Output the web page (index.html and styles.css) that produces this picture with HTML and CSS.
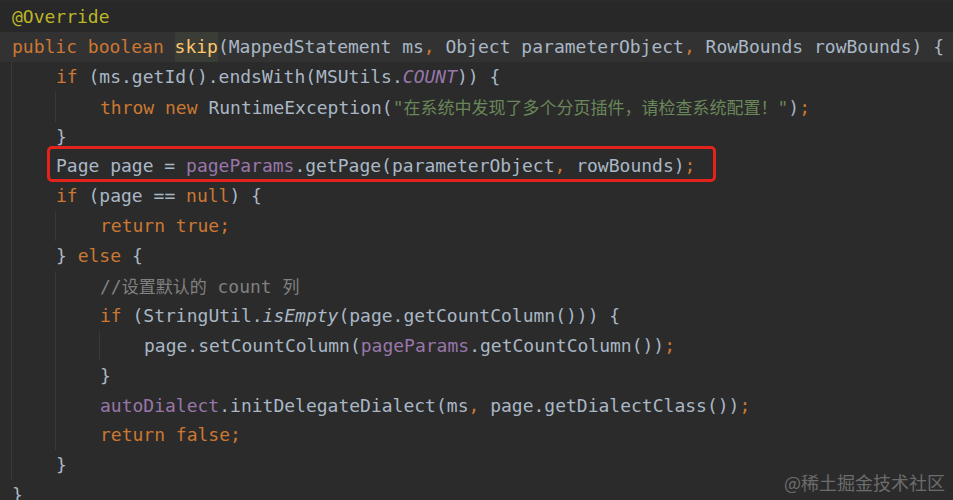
FILE: index.html
```html
<!DOCTYPE html>
<html lang="zh">
	<head>
		<meta charset="utf-8">
		<title>skip()</title>
		<link rel="stylesheet" href="styles.css">
	</head>
	<body>
		<div class="editor">
			<div class="ln first"><span class="ann">@Override</span></div>
			<div class="ln caret"><span class="kw">public boolean</span> <span class="fn">skip</span>(MappedStatement ms<span class="kw">,</span> Object parameterObject<span class="kw">,</span> RowBounds rowBounds) {</div>
			<div class="blk">
				<div class="ln"><span class="kw">if</span> (ms.getId().endsWith(MSUtils.<span class="fld it">COUNT</span>)) {</div>
				<div class="blk">
					<div class="ln"><span class="kw">throw new</span> RuntimeException(<span class="str">"<span class="cjk">在系统中发现了多个分页插件，请检查系统配置！</span>"</span>)<span class="kw">;</span></div>
				</div>
				<div class="ln">}</div>
				<div class="ln marked">Page page = <span class="fld">pageParams</span>.getPage(parameterObject<span class="kw">,</span> rowBounds)<span class="kw">;</span></div>
				<div class="ln"><span class="kw">if</span> (page == <span class="kw">null</span>) {</div>
				<div class="blk">
					<div class="ln"><span class="kw">return true;</span></div>
				</div>
				<div class="ln">} <span class="kw">else</span> {</div>
				<div class="blk">
					<div class="ln"><span class="cmt">//<span class="cjk">设置默认的</span> count <span class="cjk">列</span></span></div>
					<div class="ln"><span class="kw">if</span> (StringUtil.<span class="it">isEmpty</span>(page.getCountColumn())) {</div>
					<div class="blk">
						<div class="ln">page.setCountColumn(<span class="fld">pageParams</span>.getCountColumn())<span class="kw">;</span></div>
					</div>
					<div class="ln">}</div>
					<div class="ln"><span class="fld">autoDialect</span>.initDelegateDialect(ms<span class="kw">,</span> page.getDialectClass())<span class="kw">;</span></div>
					<div class="ln"><span class="kw">return false;</span></div>
				</div>
				<div class="ln">}</div>
			</div>
			<div class="ln">}</div>
		</div>

		<div class="watermark">@稀土掘金技术社区</div>
	</body>
</html>
```
FILE: styles.css
```css
*, *:after, *:before { box-sizing: border-box; }

html, body {
	margin: 0;
	height: 500px;
	overflow: hidden;
}

body {
	position: relative;
	background: #2b2b2b;
	color: #a9b7c6;
	font-family: 'DejaVu Sans Mono', 'Liberation Mono', monospace;
	font-size: 18px;
}

/*************************************
Editor lines and indent guides
**************************************/

.editor {
	padding-top: 2px;
}

.ln {
	height: 29.9px;
	line-height: 29.9px;
	padding-left: 12px;
	white-space: pre;
}

.ln.first {
	background: #282828;
}

.ln.caret {
	background: #323232;
}

.blk {
	margin-left: 11px;
	border-left: 1px solid #393939;
}

.blk .blk {
	margin-left: 43px;
}

.blk > .ln {
	padding-left: 44px;
}

.blk > .blk + .ln,
.blk > .ln + .blk {
}

/*************************************
Syntax colours
**************************************/

.kw { color: #cc7832; }
.ann { color: #bbb529; }
.str { color: #6a8759; }
.cmt { color: #808080; }
.fld { color: #9876aa; }
.it { font-style: italic; }

.fn {
	color: #ffc66d;
	background: #3a3d35;
	display: inline-block;
	height: 29.9px;
}

.cjk {
	font-family: 'Noto Sans CJK SC', sans-serif;
	font-size: 17px;
}

/*************************************
Red highlight box
**************************************/

.marked {
	position: relative;
}

.marked::before {
	content: '';
	position: absolute;
	left: 35px;
	top: -5px;
	width: 669px;
	height: 36px;
	border: 3px solid #e5231d;
	border-radius: 5px;
}

/*************************************
Watermark
**************************************/

.watermark {
	position: absolute;
	right: 8px;
	bottom: 6px;
	font-family: 'Noto Sans CJK SC', sans-serif;
	font-size: 18px;
	color: #6c6c6c;
	line-height: 1.2;
}
```
